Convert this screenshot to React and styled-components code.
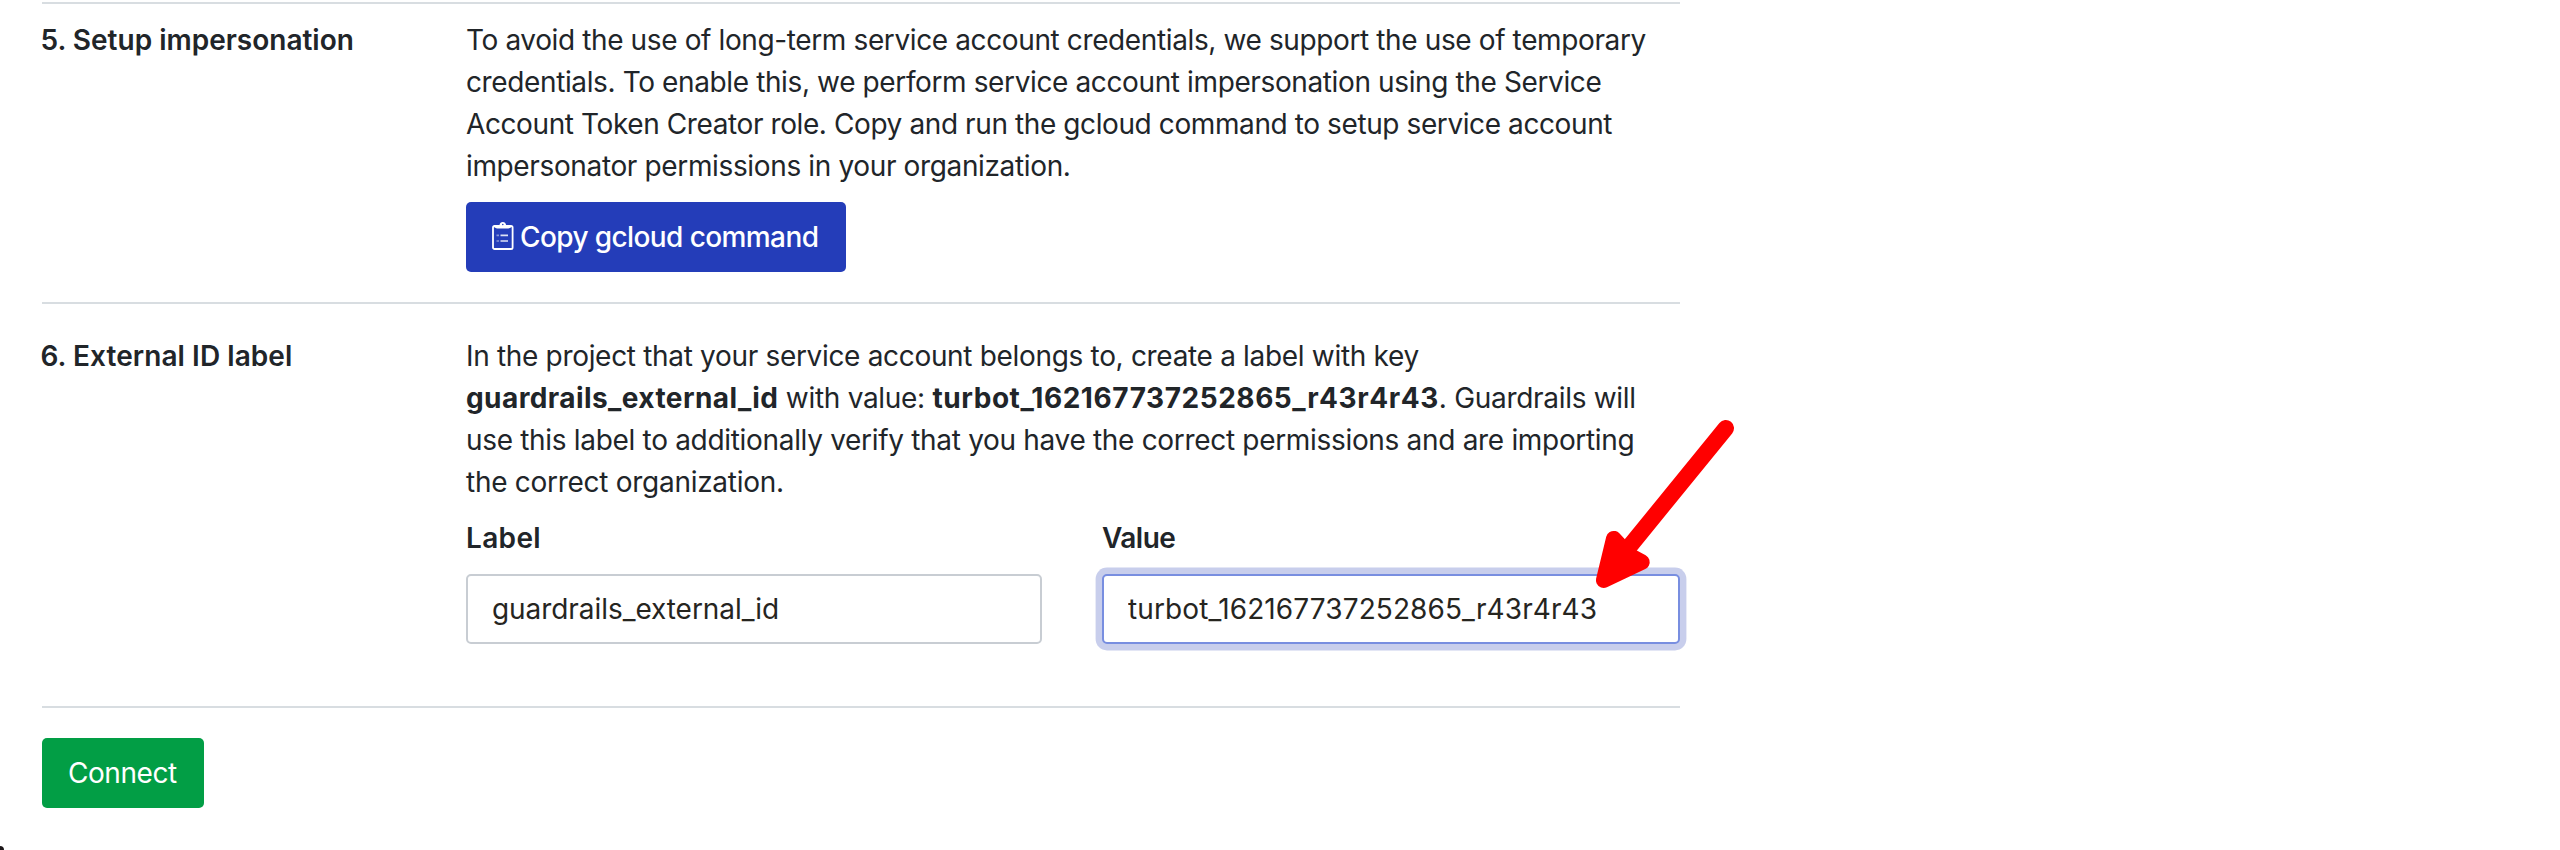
import React from "react";
import styled, { createGlobalStyle, css } from "styled-components";

const GlobalStyle = createGlobalStyle`
  *, *::before, *::after { box-sizing: border-box; }
  body {
    margin: 0;
    background: #fff;
    color: #212529;
    font-family: Inter, "Liberation Sans", sans-serif;
    font-size: 28px;
    line-height: 42px;
  }
`;

const Page = styled.main`
  position: relative;
  width: 2560px;
  height: 850px;
  padding: 2px 0 0 42px;
  overflow: hidden;
`;

const Form = styled.form`
  width: 1638px;
`;

const Step = styled.section`
  display: grid;
  grid-template-columns: 424px 1fr;
  height: ${(p) => p.$height}px;
  padding-top: ${(p) => p.$top}px;
  border-top: 2px solid #d8dde1;
`;

const StepTitle = styled.h2`
  margin: 0 0 0 -1.5px;
  font-size: 28px;
  font-weight: 600;
  letter-spacing: ${(p) => p.$track || 0}px;
`;

const Description = styled.p`
  margin: 0;
`;

const Line = styled.span`
  display: block;
  white-space: nowrap;
  letter-spacing: ${(p) => p.$track}px;
`;

const Key = styled.strong`
  font-weight: 700;
  letter-spacing: ${(p) => p.$track}px;
`;

const Button = styled.button`
  display: flex;
  align-items: center;
  height: 70px;
  width: ${(p) => p.$width}px;
  padding: 0 0 0 26px;
  border: 0;
  border-radius: 5px;
  background: ${(p) => (p.$tone === "success" ? "#029e45" : "#243db9")};
  color: #fff;
  font: inherit;
  font-weight: ${(p) => p.$weight};
  letter-spacing: ${(p) => p.$track}px;
  white-space: nowrap;
`;

const CopyButton = styled(Button)`
  margin-top: 15px;
  gap: 6px;
`;

const ClipboardSvg = styled.svg`
  width: 22px;
  height: 28px;
  margin-top: -2px;
  flex: none;
`;

const Fields = styled.div`
  display: grid;
  grid-template-columns: 576px 578px;
  justify-content: space-between;
  margin-top: 14px;
`;

const Field = styled.label`
  display: flex;
  flex-direction: column;
  gap: 15px;
`;

const FieldName = styled.span`
  font-weight: 600;
  letter-spacing: ${(p) => p.$track}px;
`;

const Input = styled.input`
  width: 100%;
  height: 70px;
  padding: 0 24px;
  border: 2px solid #c8cdd3;
  border-radius: 5px;
  outline: 0;
  background: #fff;
  color: #26251f;
  font: inherit;
  letter-spacing: ${(p) => p.$track}px;
  ${(p) =>
    p.$active &&
    css`
      border-color: #788ee0;
      box-shadow: 0 0 0 6.4px #c8ceec;
    `}
`;

const Footer = styled.footer`
  padding-top: 30px;
  border-top: 2px solid #d8dde1;
`;

const Arrow = styled.svg`
  position: absolute;
  left: 1590px;
  top: 414px;
`;

const Corner = styled.span`
  position: absolute;
  left: 0;
  bottom: 0;
  width: 4px;
  height: 4px;
  border-top-right-radius: 4px;
  background: #1c1619;
`;

function ClipboardIcon() {
  return (
    <ClipboardSvg viewBox="0 0 22 28" fill="none">
      <rect x="1" y="4" width="19.6" height="23" rx="1.6" stroke="#fff" strokeWidth="1.8" />
      <path d="M2.5 3H7.5C7.8 1.2 9 0 10.8 0S13.8 1.2 14.1 3H19V5.4L16.5 6.4H5L2.5 5.4Z" fill="#fff" />
      <circle cx="10.8" cy="2.5" r="0.8" fill="#243db9" />
      <path d="M8.5 13.4H16M8.5 19H16" stroke="#fff" strokeOpacity=".85" strokeWidth="1.7" />
      <path d="M4.5 13.4H7M4.5 19H7" stroke="#fff" strokeOpacity=".45" strokeWidth="1.7" />
    </ClipboardSvg>
  );
}

export default function App() {
  return (
    <>
      <GlobalStyle />
      <Page>
        <Form onSubmit={(e) => e.preventDefault()}>
          <Step $height={300} $top={15}>
            <StepTitle>5. Setup impersonation</StepTitle>
            <div>
              <Description>
                <Line $track={-0.38}>To avoid the use of long-term service account credentials, we support the use of temporary</Line>
                <Line $track={-0.378}>credentials. To enable this, we perform service account impersonation using the Service</Line>
                <Line $track={-0.402}>Account Token Creator role. Copy and run the gcloud command to setup service account</Line>
                <Line $track={-0.36}>impersonator permissions in your organization.</Line>
              </Description>
              <CopyButton type="button" $width={380} $weight={500} $track={-0.6}>
                <ClipboardIcon />
                Copy gcloud command
              </CopyButton>
            </div>
          </Step>
          <Step $height={404} $top={31}>
            <StepTitle $track={0.055}>6. External ID label</StepTitle>
            <div>
              <Description>
                <Line $track={-0.32}>In the project that your service account belongs to, create a label with key</Line>
                <Line $track={-0.3}>
                  <Key $track={0.42}>guardrails_external_id</Key> with value:{" "}
                  <Key $track={0.56}>turbot_162167737252865_r43r4r43</Key>. Guardrails will
                </Line>
                <Line $track={-0.315}>use this label to additionally verify that you have the correct permissions and are importing</Line>
                <Line $track={-0.28}>the correct organization.</Line>
              </Description>
              <Fields>
                <Field>
                  <FieldName $track={0.35}>Label</FieldName>
                  <Input readOnly $track={-0.06} value="guardrails_external_id" />
                </Field>
                <Field>
                  <FieldName $track={-0.5}>Value</FieldName>
                  <Input readOnly $active $track={0.1} value="turbot_162167737252865_r43r4r43" />
                </Field>
              </Fields>
            </div>
          </Step>
          <Footer>
            <Button type="submit" $tone="success" $width={162} $weight={400} $track={-0.44}>
              Connect
            </Button>
          </Footer>
        </Form>
        <Arrow width="150" height="180" viewBox="1590 414 150 180">
          <path d="M1725.8 428.2L1625 552" stroke="#f00" strokeWidth="16.4" strokeLinecap="round" />
          <path
            d="M1603.6 580.3L1613.7 538.6L1629 555L1642 562Z"
            fill="#f00"
            stroke="#f00"
            strokeWidth="15.4"
            strokeLinejoin="round"
          />
        </Arrow>
        <Corner />
      </Page>
    </>
  );
}
